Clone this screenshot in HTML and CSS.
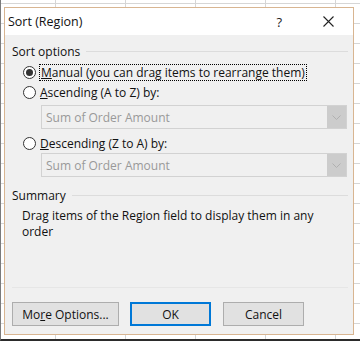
FILE: index.html
```html
<!DOCTYPE html>
<html lang="en">
<head>
    <meta charset="UTF-8">
    <meta name="viewport" content="width=device-width, initial-scale=1.0">
    <title>Sort (Region)</title>
    <link rel="stylesheet" href="styles.css">
</head>
<body>
    <div class="dialog">
        <div class="titlebar">
            <span class="title">Sort (Region)</span>
            <span class="help">?</span>
            <span class="close">
                <svg width="11" height="11" viewBox="0 0 11 11">
                    <path d="M0.5 0.5 L10.5 10.5 M10.5 0.5 L0.5 10.5" stroke="#222" stroke-width="1.1" fill="none"/>
                </svg>
            </span>
        </div>

        <div class="content">
            <div class="group-head">Sort options</div>

            <label class="radio-row first">
                <span class="radio checked"></span>
                <span class="focus"><u>M</u>anual (you can drag items to rearrange them)</span>
            </label>
            <label class="radio-row">
                <span class="radio"></span>
                <span><u>A</u>scending (A to Z) by:</span>
            </label>
            <div class="combo">
                <span class="combo-text">Sum of Order Amount</span>
                <span class="combo-btn">
                    <svg width="9" height="5" viewBox="0 0 9 5"><path d="M0.5 0.5 L4.5 4.5 L8.5 0.5" stroke="#b0b0b0" fill="none"/></svg>
                </span>
            </div>
            <label class="radio-row third">
                <span class="radio"></span>
                <span><u>D</u>escending (Z to A) by:</span>
            </label>
            <div class="combo">
                <span class="combo-text">Sum of Order Amount</span>
                <span class="combo-btn">
                    <svg width="9" height="5" viewBox="0 0 9 5"><path d="M0.5 0.5 L4.5 4.5 L8.5 0.5" stroke="#b0b0b0" fill="none"/></svg>
                </span>
            </div>

            <div class="group-head summary">Summary</div>
            <p class="desc">Drag items of the Region field to display them in any order</p>

            <div class="footer">
                <button class="btn more">Mo<u>r</u>e Options...</button>
                <button class="btn ok">OK</button>
                <button class="btn">Cancel</button>
            </div>
        </div>
    </div>
</body>
</html>
```

FILE: styles.css
```css
html {
    margin: 0;
}
body {
    margin: 0;
    width: 360px;
    height: 341px;
    box-sizing: border-box;
    overflow: hidden;
    font-family: 'Open Sans', 'Noto Sans', sans-serif;
    font-size: 12px;
    color: #111;
    background-color: #fff;
    background-image:
        repeating-linear-gradient(90deg, transparent 0 62px, #d6d6d6 62px 63px, transparent 63px 70px),
        repeating-linear-gradient(180deg, transparent 0 3px, #d6d6d6 3px 4px, transparent 4px 20px);
    background-position: -7px 0, 0 0;
    border-left: 1px solid #7a7a7a;
    border-bottom: 2px solid #2b2b2b;
    padding: 7px 0 0 3px;
}
.dialog {
    width: 350px;
    height: 328px;
    box-sizing: border-box;
    border: 1px solid #d8b591;
    background: #f0f0f0;
    display: flex;
    flex-direction: column;
}
.titlebar {
    height: 27px;
    flex: none;
    background: #fff;
    display: flex;
    align-items: center;
    padding-left: 3px;
    font-size: 12.5px;
}
.title {
    flex: 1;
}
.help {
    font-size: 13px;
    margin-right: 41px;
    color: #222;
}
.close {
    display: flex;
    margin-right: 19px;
}
.content {
    flex: 1;
    display: flex;
    flex-direction: column;
    padding: 0 5px 0 7px;
}
.group-head {
    height: 16px;
    margin-top: 8px;
    display: flex;
    align-items: center;
}
.group-head::after {
    content: "";
    flex: 1;
    height: 1px;
    background: #dcdcdc;
    margin-left: 6px;
}
.group-head.summary {
    margin-top: 10px;
}
.radio-row {
    height: 20px;
    display: flex;
    align-items: center;
    padding-left: 11px;
}
.radio-row.first {
    margin-top: 3px;
}
.radio-row.third {
    margin-top: 4px;
}
.radio {
    width: 13px;
    height: 13px;
    box-sizing: border-box;
    border: 1px solid #333;
    border-radius: 50%;
    background: #fff;
    margin-right: 4px;
    display: flex;
    align-items: center;
    justify-content: center;
}
.radio.checked::after {
    content: "";
    width: 7px;
    height: 7px;
    border-radius: 50%;
    background: #333;
}
.focus {
    outline: 1px dotted #000;
    padding: 0 1px;
    line-height: 15px;
}
.combo {
    margin: 3px 1px 0 29px;
    height: 24px;
    box-sizing: border-box;
    border: 1px solid #d2d2d2;
    background: #f0f0f0;
    display: flex;
    align-items: center;
}
.combo-text {
    flex: 1;
    padding-left: 4px;
    color: #999;
}
.combo-btn {
    width: 19px;
    height: 22px;
    background: #cccccc;
    display: flex;
    align-items: center;
    justify-content: center;
}
.radio-row.third + .combo {
    margin-top: 0;
}
.desc {
    margin: 5px 0 0 10px;
    line-height: 16px;
    width: 305px;
}
.footer {
    margin-top: auto;
    border-top: 1px solid #e6e6e6;
    padding: 14px 0 8px;
    display: flex;
    gap: 11px;
}
.btn {
    font: inherit;
    color: #111;
    width: 81px;
    height: 24px;
    background: #e1e1e1;
    border: 1px solid #adadad;
    padding: 0;
}
.btn.more {
    width: 107px;
}
.btn.ok {
    border: 2px solid #0078d7;
    margin-right: 1px;
}
```
